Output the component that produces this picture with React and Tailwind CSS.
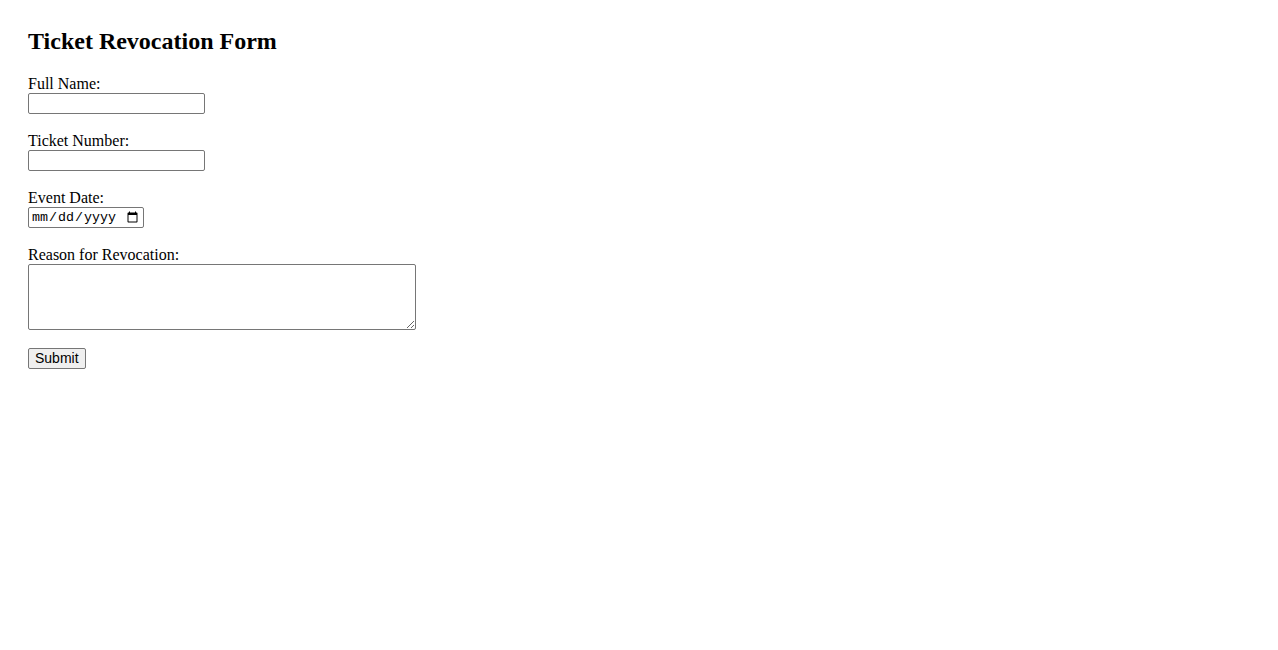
import { useState } from "react";

function Field({ label, children }) {
  return (
    <div className="mb-[18px]">
      <label className="block h-[18px] leading-[18px]">{label}</label>
      {children}
    </div>
  );
}

const boxCls =
  "block border border-[#767676] rounded-[2px] bg-white text-[13.33px] px-[2px]";

export default function App() {
  const [form, setForm] = useState({ name: "", ticket: "", date: "", reason: "" });

  const update = (key) => (e) => setForm({ ...form, [key]: e.target.value });

  const handleSubmit = (e) => {
    e.preventDefault();
  };

  return (
    <div className="min-h-screen bg-white pt-[27px] pl-[28px] font-['Liberation_Serif','Times_New_Roman',serif] text-[16px] text-black">
      <h2 className="text-[24px] font-bold leading-[28px] mb-[20px]">Ticket Revocation Form</h2>
      <form onSubmit={handleSubmit}>
        <Field label="Full Name:">
          <input type="text" value={form.name} onChange={update("name")} className={`${boxCls} font-['Liberation_Sans',Arial,sans-serif] w-[177px] h-[21px]`} />
        </Field>
        <Field label="Ticket Number:">
          <input type="text" value={form.ticket} onChange={update("ticket")} className={`${boxCls} font-['Liberation_Sans',Arial,sans-serif] w-[177px] h-[21px]`} />
        </Field>
        <Field label="Event Date:">
          <input type="date" value={form.date} onChange={update("date")} className={`${boxCls} font-['Liberation_Mono','Courier_New',monospace] w-[116px] h-[21px]`} />
        </Field>
        <Field label="Reason for Revocation:">
          <textarea value={form.reason} onChange={update("reason")} className={`${boxCls} font-['Liberation_Mono','Courier_New',monospace] w-[388px] h-[66px] resize`} />
        </Field>
        <button
          type="submit"
          className="block h-[21px] px-[6px] border border-[#767676] rounded-[2px] bg-[#efefef] font-['Liberation_Sans',Arial,sans-serif] text-[14px] leading-[17px]"
        >
          Submit
        </button>
      </form>
    </div>
  );
}
